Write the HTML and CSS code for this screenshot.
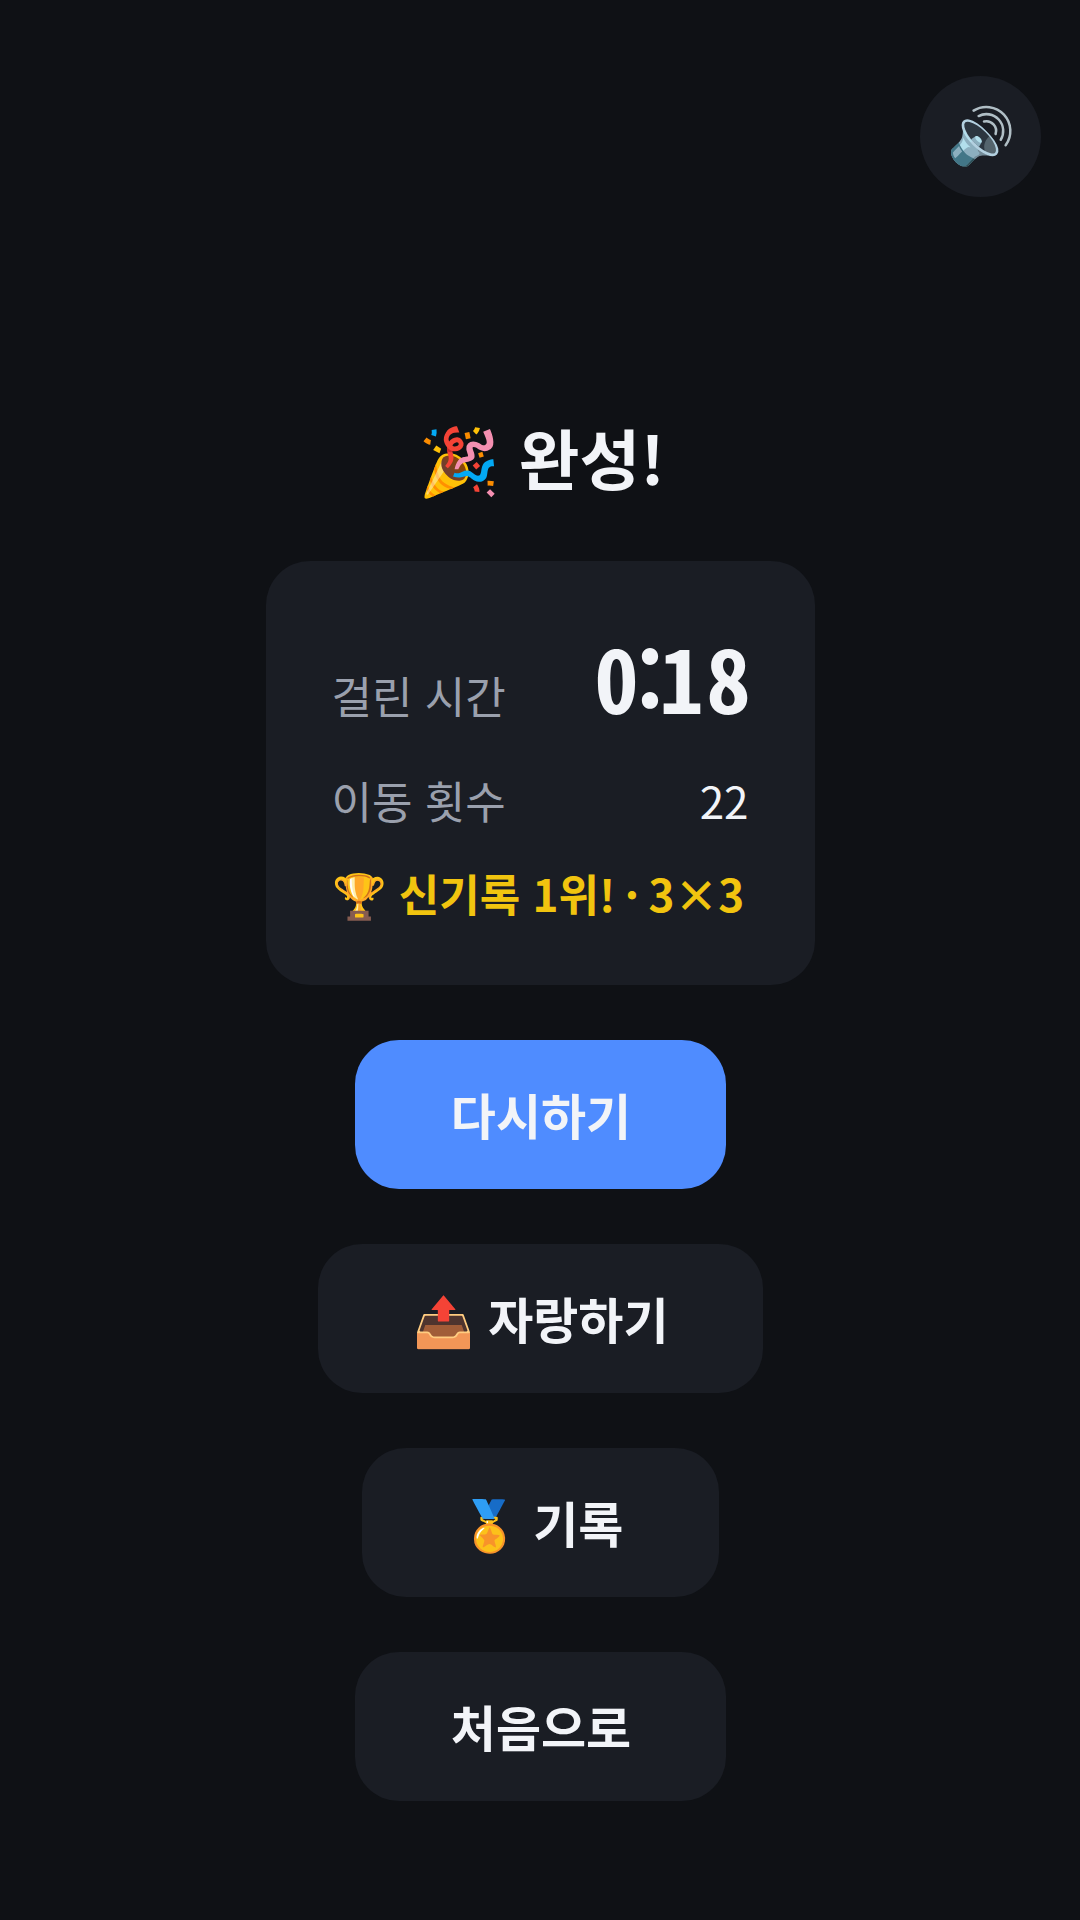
FILE: index.html
```html
<!DOCTYPE html>
<html lang="ko">
<head>
<meta charset="utf-8">
<title>완성!</title>
<link rel="stylesheet" href="styles.css">
</head>
<body>
<button class="sound">🔊</button>
<main class="page">
  <h1 class="title">🎉 완성!</h1>
  <section class="card">
    <div class="row row-time"><span class="label">걸린 시간</span><span class="time"><span class="t-min">0</span><span class="t-colon">:</span><span class="t-one">1</span>8</span></div>
    <div class="row row-moves"><span class="label">이동 횟수</span><span class="moves">22</span></div>
    <div class="record">🏆 신기록 1위!<span class="dot"> · </span>3×3</div>
  </section>
  <button class="btn primary btn-retry">다시하기</button>
  <button class="btn btn-share">📤 자랑하기</button>
  <button class="btn btn-rank">🏅 기록</button>
  <button class="btn btn-home">처음으로</button>
</main>
</body>
</html>
```
FILE: styles.css
```css
* { box-sizing: border-box; }
html, body { margin: 0; height: 100%; }
body {
  width: 1080px;
  height: 1920px;
  background: #0f1115;
  color: #f2f4f8;
  font-family: "Noto Sans CJK KR", "Noto Sans", sans-serif;
  position: relative;
  overflow: hidden;
}
.sound {
  position: absolute;
  top: 76px;
  right: 39px;
  width: 121px;
  height: 121px;
  border: 0;
  border-radius: 50%;
  background: #1a1d24;
  color: #f2f4f8;
  font-size: 55px;
  padding: 0 0 12px;
  font-family: inherit;
}
.page {
  display: flex;
  flex-direction: column;
  align-items: center;
  padding-top: 399px;
}
.title {
  margin: 0 0 48px;
  padding-left: 3px;
  font-size: 66px;
  line-height: 114px;
  font-weight: 700;
}
.card {
  width: 549px;
  height: 424px;
  padding: 65px 66px 0;
  border-radius: 44px;
  background: #1a1d24;
  margin-bottom: 55px;
  display: flex;
  flex-direction: column;
}
.row {
  display: flex;
  justify-content: space-between;
  align-items: baseline;
}
.label { font-size: 44px; color: #9aa0ad; line-height: 72px; }
.time {
  font-size: 88px;
  font-weight: 700;
  line-height: 100px;
  font-feature-settings: "hwid";
  margin-right: -2px;
}
.t-min { letter-spacing: -10.5px; }
.t-colon { letter-spacing: -12.5px; }
.t-one { letter-spacing: 3px; }
.moves { font-size: 44px; line-height: 72px; }
.row-moves { margin-top: 33px; }
.record {
  margin-top: 21px;
  font-size: 44px;
  line-height: 72px;
  font-weight: 700;
  color: #f1c40f;
  white-space: nowrap;
}
.dot { margin: 0 -3px; }
.btn {
  height: 149px;
  border: 0;
  border-radius: 44px;
  background: #1a1d24;
  color: #f2f4f8;
  font-family: inherit;
  font-size: 49px;
  font-weight: 700;
  padding: 0 0 2px 2px;
  margin-bottom: 55px;
}
.primary { background: #4f8cff; }
.btn-retry, .btn-home { width: 371px; }
.btn-share { width: 445px; }
.btn-rank { width: 357px; }
```
